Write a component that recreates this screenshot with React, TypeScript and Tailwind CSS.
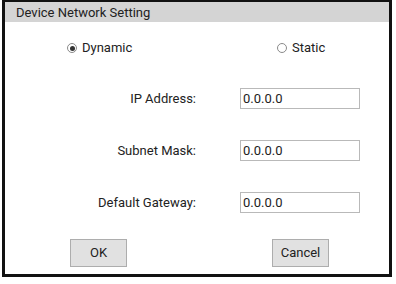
const font = { fontFamily: 'Roboto, "Open Sans", sans-serif' };

const fields = [
  { label: "IP Address:", value: "0.0.0.0" },
  { label: "Subnet Mask:", value: "0.0.0.0" },
  { label: "Default Gateway:", value: "0.0.0.0" },
];

function Radio({ checked, label }: { checked?: boolean; label: string }) {
  return (
    <label className="flex items-center gap-[5px]">
      <span className="flex h-[10px] w-[10px] items-center justify-center rounded-full border border-[#8a8a8a] bg-white">
        {checked && <span className="h-[5px] w-[5px] rounded-full bg-[#333]" />}
      </span>
      <span>{label}</span>
    </label>
  );
}

export default function App() {
  return (
    <div className="h-[284px] w-[396px] bg-white text-[13px] text-[#222]" style={font}>
      <div className="ml-[2px] flex h-[277px] w-[390px] flex-col border-x-[3px] border-t-2 border-b-[3px] border-[#111]">
        <div className="flex h-[20px] items-center bg-[#d4d4d4] pl-[11px] leading-none">
          Device Network Setting
        </div>

        <div className="mt-[16px] flex h-[20px] items-center pl-[62px]">
          <div className="w-[210px]">
            <Radio checked label="Dynamic" />
          </div>
          <Radio label="Static" />
        </div>

        <div className="mt-[30px] flex flex-col gap-[31px]">
          {fields.map((f) => (
            <div key={f.label} className="flex h-[21px] items-center">
              <span className="w-[191px] text-right">{f.label}</span>
              <div className="ml-[44px] flex h-[21px] w-[120px] items-center border border-[#b9b9b9] pl-[2px]">
                {f.value}
              </div>
            </div>
          ))}
        </div>

        <div className="mt-[26px] flex">
          <button className="ml-[65px] h-[28px] w-[57px] border border-[#adadad] bg-[#e1e1e1]">OK</button>
          <button className="ml-[145px] h-[28px] w-[57px] border border-[#adadad] bg-[#e1e1e1]">Cancel</button>
        </div>
      </div>
    </div>
  );
}
